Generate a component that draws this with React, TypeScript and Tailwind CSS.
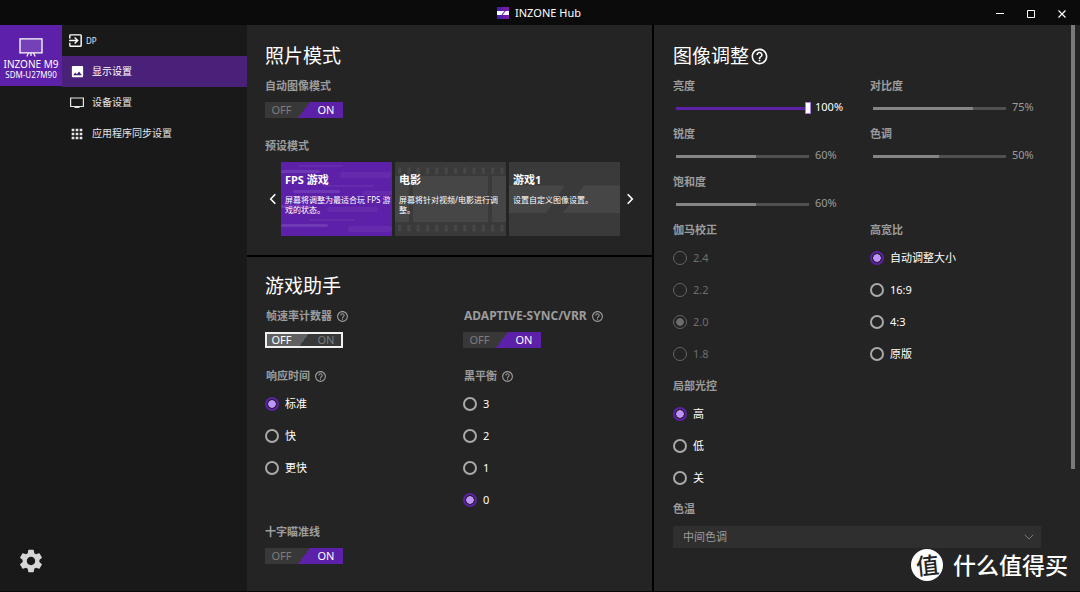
import { useId, useState } from "react";
import type { CSSProperties, ReactNode } from "react";
import { MdApps, MdExitToApp, MdHelpOutline, MdImage, MdSettings } from "react-icons/md";

function SectionTitle({ children }: { children: ReactNode }) {
  return <h2 className="flex h-7 items-center gap-px text-[19px] leading-7 text-white">{children}</h2>;
}

const labelClass = "flex h-4 items-center gap-1 font-bold leading-4 text-[#9c9c9c]";

function Help({ label, size = 13 }: { label: string; size?: number }) {
  return (
    <button type="button" aria-label={label} className="flex items-center">
      <MdHelpOutline size={size} />
    </button>
  );
}

function Toggle({
  title,
  initial,
  help,
  className = "text-[11px]",
}: {
  title: string;
  initial: boolean;
  help?: boolean;
  className?: string;
}) {
  const id = useId();
  const [on, setOn] = useState(initial);
  return (
    <div className="flex flex-col items-start gap-2">
      <div className={`${labelClass} ${className}`}>
        <span id={id}>{title}</span>
        {help && <Help label={`${title} ?`} />}
      </div>
      <button
        type="button"
        role="switch"
        aria-checked={on}
        aria-labelledby={id}
        onClick={() => setOn(!on)}
        className={`grid h-4 w-[78px] grid-cols-2 items-center text-[11px] leading-4 ${
          on
            ? "bg-[linear-gradient(127deg,#383838_50%,#5d20a8_50%)]"
            : "bg-[linear-gradient(127deg,#606060_50%,#383838_50%)] outline-2 -outline-offset-2 outline-[#f0f0f0]"
        }`}
      >
        <span className={on ? "pr-[6px] text-[#7d7d7d]" : "pr-[6px] text-white"}>OFF</span>
        <span className={on ? "pl-[5px] text-white" : "pl-[5px] text-[#7d7d7d]"}>ON</span>
      </button>
    </div>
  );
}

function RadioGroup({
  title,
  options,
  initial,
  help,
  disabled,
  className = "text-[11px]",
}: {
  title: string;
  options: string[];
  initial: string;
  help?: boolean;
  disabled?: boolean;
  className?: string;
}) {
  const name = useId();
  const [value, setValue] = useState(initial);
  return (
    <fieldset className="min-w-0" disabled={disabled}>
      <legend className={`${labelClass} ${className}`}>
        {title}
        {help && <Help label={`${title} ?`} />}
      </legend>
      <div className="mt-1">
        {options.map((o) => (
          <label
            key={o}
            className={`flex h-8 items-center gap-[6px] text-[11px] ${disabled ? "text-[#6e6e6e]" : "text-white"}`}
          >
            <input
              type="radio"
              name={name}
              checked={value === o}
              onChange={() => setValue(o)}
              className={`size-[14px] shrink-0 appearance-none rounded-full ${
                disabled
                  ? "border border-[#636363] checked:bg-[radial-gradient(circle,#6c6c6c_3.5px,transparent_4px)]"
                  : "border-2 border-[#a9a9a9] checked:border-[#5d20a8] checked:bg-[radial-gradient(circle,#bd92fb_3.5px,transparent_4px)]"
              }`}
            />
            {o}
          </label>
        ))}
      </div>
    </fieldset>
  );
}

function Slider({ title, initial, active }: { title: string; initial: number; active?: boolean }) {
  const id = useId();
  const [value, setValue] = useState(initial);
  const style: CSSProperties = {
    backgroundImage: `linear-gradient(to right, ${active ? "#5d20a8" : "#858585"} ${value}%, #505050 ${value}%)`,
  };
  return (
    <div className="h-12">
      <label htmlFor={id} className={`${labelClass} text-[11px]`}>
        {title}
      </label>
      <div className="flex h-7 items-center pl-[3px]">
        <input
          id={id}
          type="range"
          min={0}
          max={100}
          value={value}
          onChange={(e) => setValue(Number(e.target.value))}
          style={style}
          className={`h-[3px] appearance-none ${
            active
              ? "w-[135px] [&::-webkit-slider-thumb]:h-3 [&::-webkit-slider-thumb]:w-[6px] [&::-webkit-slider-thumb]:appearance-none [&::-webkit-slider-thumb]:border [&::-webkit-slider-thumb]:border-[#a77be0] [&::-webkit-slider-thumb]:bg-white"
              : "mr-[2px] w-[133px] [&::-webkit-slider-thumb]:h-3 [&::-webkit-slider-thumb]:w-[6px] [&::-webkit-slider-thumb]:appearance-none [&::-webkit-slider-thumb]:opacity-0"
          }`}
        />
        <output
          htmlFor={id}
          className={`pb-[3px] pl-[4px] text-[11px] leading-4 ${active ? "text-white" : "text-[#9c9c9c]"}`}
        >
          {value}%
        </output>
      </div>
    </div>
  );
}

const streaks = [
  [17, 3, 45, 2],
  [0, 8, 39, 3],
  [59, 10, 51, 6],
  [42, 23, 51, 2],
  [12, 28, 47, 3],
  [81, 29, 30, 4],
  [0, 43, 30, 3],
  [46, 45, 51, 5],
  [28, 57, 46, 2],
  [0, 62, 47, 3],
  [67, 64, 44, 6],
];

const artClass = "absolute inset-0 h-full w-full";

function StreakArt() {
  return (
    <svg viewBox="0 0 111 74" preserveAspectRatio="none" className={artClass} aria-hidden="true">
      {streaks.map(([x, y, w, h]) => (
        <rect
          key={`${x}-${y}`}
          x={x}
          y={y}
          width={w}
          height={h}
          rx={h / 2}
          fill={h === 3 ? "#6f38b4" : "#662bad"}
        />
      ))}
    </svg>
  );
}

function FilmArt() {
  return (
    <svg viewBox="0 0 111 74" preserveAspectRatio="none" className={artClass} fill="#464646" aria-hidden="true">
      {Array.from({ length: 12 }, (_, i) => (
        <g key={i}>
          <rect x={3 + i * 9.3} y={5.5} width={3.3} height={6.5} />
          <rect x={3 + i * 9.3} y={63} width={3.3} height={6.5} />
        </g>
      ))}
      <rect x={0} y={14} width={14} height={46} />
      <rect x={18} y={14} width={75} height={46} />
      <rect x={97} y={14} width={14} height={46} />
    </svg>
  );
}

function BandArt() {
  return (
    <svg viewBox="0 0 111 74" preserveAspectRatio="none" className={artClass} fill="#464646" aria-hidden="true">
      <path d="M0 23.5H56L37 51H0zM75 23.5H111V51H54z" />
    </svg>
  );
}

const presets = [
  { name: "FPS 游戏", text: "屏幕将调整为最适合玩 FPS 游戏的状态。", art: <StreakArt /> },
  { name: "电影", text: "屏幕将针对视频/电影进行调整。", art: <FilmArt /> },
  { name: "游戏1", text: "设置自定义图像设置。", art: <BandArt /> },
];

function Presets() {
  const [selected, setSelected] = useState(0);
  return (
    <div className="mt-2 flex items-center">
      <button type="button" aria-label="上一个" className="flex w-4 shrink-0 justify-center text-white">
        <svg width="8" height="12" viewBox="0 0 8 12" fill="none" stroke="currentColor" strokeWidth="1.6">
          <path d="M6.3 1.2 1.7 6l4.6 4.8" />
        </svg>
      </button>
      <div className="grid flex-1 grid-cols-3 gap-[3px]">
        {presets.map((p, i) => (
          <button
            key={p.name}
            type="button"
            aria-pressed={selected === i}
            onClick={() => setSelected(i)}
            className={`relative flex h-[74px] flex-col pl-1 pt-[10px] text-left text-white ${
              selected === i ? "bg-[#5d20a8]" : "bg-[#3a3a3a]"
            }`}
          >
            {p.art}
            <span className="relative text-[11px] font-bold leading-4">{p.name}</span>
            <span className="relative mt-[7px] text-[8px] leading-[10px]">{p.text}</span>
          </button>
        ))}
      </div>
      <button type="button" aria-label="下一个" className="flex w-5 shrink-0 justify-center text-white">
        <svg width="8" height="12" viewBox="0 0 8 12" fill="none" stroke="currentColor" strokeWidth="1.6">
          <path d="M1.7 1.2 6.3 6l-4.6 4.8" />
        </svg>
      </button>
    </div>
  );
}

function TitleBar() {
  return (
    <header className="grid h-[25px] grid-cols-[1fr_auto_1fr] items-center bg-[#0b0b0b] text-white">
      <span />
      <div className="flex items-center gap-[6px] pr-[2px]">
        <svg width="12" height="12" viewBox="0 0 12 12" aria-hidden="true">
          <defs>
            <linearGradient id="logo" x1="0" x2="1" y1="0" y2="0">
              <stop offset="0" stopColor="#3a22b0" />
              <stop offset="1" stopColor="#8a1a9c" />
            </linearGradient>
          </defs>
          <rect width="12" height="12" fill="url(#logo)" />
          <path d="M0 4h7.500L4.300 8H0zM8.700 4H12v4H5.500z" fill="#fff" />
        </svg>
        <h1 className="text-[11px] leading-4">INZONE Hub</h1>
      </div>
      <div className="flex justify-end pr-[3px]">
        <button type="button" aria-label="最小化" className="flex h-[25px] w-[31px] items-center justify-center">
          <svg width="10" height="10" viewBox="0 0 10 10" stroke="currentColor">
            <path d="M1 5.500h8" />
          </svg>
        </button>
        <button type="button" aria-label="最大化" className="flex h-[25px] w-[31px] items-center justify-center pt-[2px]">
          <svg width="10" height="10" viewBox="0 0 10 10" fill="none" stroke="currentColor">
            <path d="M1.500 1.500h7v7h-7z" />
          </svg>
        </button>
        <button type="button" aria-label="关闭" className="flex h-[25px] w-[31px] items-center justify-center pt-[2px]">
          <svg width="10" height="10" viewBox="0 0 10 10" stroke="currentColor" strokeWidth="1.200">
            <path d="m1.500 1.500 7 7M8.500 1.500l-7 7" />
          </svg>
        </button>
      </div>
    </header>
  );
}

function MonitorIcon() {
  return (
    <svg width="14" height="12" viewBox="0 0 14 12" fill="none" stroke="currentColor" aria-hidden="true">
      <path d="M.6 1h12.800v8.500H.6z" strokeWidth="1.200" />
      <path d="M4.500 10.500h5" />
    </svg>
  );
}

const navItems = [
  { label: "显示设置", icon: <MdImage size={15} />, current: true },
  { label: "设备设置", icon: <MonitorIcon />, current: false },
  { label: "应用程序同步设置", icon: <MdApps size={16} />, current: false },
];

function Sidebar() {
  return (
    <aside className="flex w-[247px] shrink-0 bg-[#191919] text-[#e6e6e6]">
      <div className="flex w-[62px] shrink-0 flex-col items-center justify-between pb-4">
        <button
          type="button"
          className="flex h-[61px] w-full flex-col items-center whitespace-nowrap bg-[#5d20a8] pt-[13px] text-white"
        >
          <svg width="24" height="19" viewBox="0 0 24 19" fill="none" stroke="currentColor" aria-hidden="true">
            <path d="M1 .8h22v14H1z" fill="#7540b8" strokeWidth="1.300" />
            <path d="M9.500 15 7.800 18.500M14.500 15l1.700 3.500M12 15v3" strokeWidth="1.200" />
          </svg>
          <span className="text-[10px] leading-[14px]">INZONE M9</span>
          <span className="text-[8px] leading-2">SDM-U27M90</span>
        </button>
        <button type="button" aria-label="设置" className="text-[#d6d6d6]">
          <MdSettings size={28} />
        </button>
      </div>
      <nav className="min-w-0 flex-1">
        <div className="flex h-[31px] items-center gap-[2px] pl-[5px] text-[8px]">
          <MdExitToApp size={17} className="text-white" />
          DP
        </div>
        {navItems.map((n) => (
          <a
            key={n.label}
            href="#"
            aria-current={n.current ? "page" : undefined}
            className={`flex h-[31px] items-center text-[10px] ${n.current ? "bg-[#492178] text-white" : ""}`}
          >
            <span className="flex w-[30px] justify-center">{n.icon}</span>
            {n.label}
          </a>
        ))}
      </nav>
    </aside>
  );
}

function ColorTemperature() {
  return (
    <div className="mt-[7px]">
      <label htmlFor="color-temperature" className={`${labelClass} text-[11px]`}>
        色温
      </label>
      <div className="relative mt-[9px] flex items-center">
        <select
          id="color-temperature"
          defaultValue="中间色调"
          className="h-[22px] w-full appearance-none bg-[#2f2f2f] pl-[10px] text-[11px] text-[#9c9c9c]"
        >
          <option>中间色调</option>
        </select>
        <svg
          width="10"
          height="6"
          viewBox="0 0 10 6"
          fill="none"
          stroke="#777"
          className="pointer-events-none absolute right-[7px]"
          aria-hidden="true"
        >
          <path d="m.7.7 4.300 4.300L9.300.7" />
        </svg>
      </div>
    </div>
  );
}

export default function App() {
  return (
    <div className="relative flex min-h-screen flex-col bg-[#242424] font-['Noto_Sans','Noto_Sans_CJK_SC',sans-serif]">
      <TitleBar />
      <main className="flex flex-1 border-b border-[#0c0608]">
        <Sidebar />
        <div className="grid min-w-0 flex-1 grid-cols-[407fr_426fr]">
          <div className="flex flex-col border-r-2 border-black">
            <section className="border-b-2 border-black pb-[19px] pl-[18px] pr-3 pt-[17px]">
              <SectionTitle>照片模式</SectionTitle>
              <div className="mt-2">
                <Toggle title="自动图像模式" initial />
              </div>
              <h3 className={`${labelClass} mt-5 text-[11px]`}>预设模式</h3>
              <Presets />
            </section>
            <section className="pl-[18px] pt-[15px]">
              <SectionTitle>游戏助手</SectionTitle>
              <div className="mt-2 grid grid-cols-[198px_1fr] gap-y-5">
                <Toggle title="帧速率计数器" initial={false} help className="pl-px text-[11px]" />
                <Toggle title="ADAPTIVE-SYNC/VRR" initial help className="pl-px text-[12px]" />
                <RadioGroup
                  title="响应时间"
                  options={["标准", "快", "更快"]}
                  initial="标准"
                  help
                  className="pl-px text-[11px]"
                />
                <RadioGroup
                  title="黑平衡"
                  options={["3", "2", "1", "0"]}
                  initial="0"
                  help
                  className="pl-px text-[11px]"
                />
              </div>
              <div className="mt-2">
                <Toggle title="十字瞄准线" initial />
              </div>
            </section>
          </div>
          <div className="flex">
            <section className="min-w-0 flex-1 pl-[19px] pr-[30px] pt-[17px]">
              <SectionTitle>
                图像调整
                <Help label="图像调整 ?" size={19} />
              </SectionTitle>
              <div className="mt-2 grid grid-cols-[197px_1fr]">
                <Slider title="亮度" initial={100} active />
                <Slider title="对比度" initial={75} />
                <Slider title="锐度" initial={60} />
                <Slider title="色调" initial={50} />
                <Slider title="饱和度" initial={60} />
              </div>
              <div className="grid grid-cols-[197px_1fr] gap-y-2">
                <RadioGroup title="伽马校正" options={["2.4", "2.2", "2.0", "1.8"]} initial="2.0" disabled />
                <RadioGroup
                  title="高宽比"
                  options={["自动调整大小", "16:9", "4:3", "原版"]}
                  initial="自动调整大小"
                />
                <RadioGroup title="局部光控" options={["高", "低", "关"]} initial="高" />
              </div>
              <ColorTemperature />
            </section>
            <div className="w-[9px] shrink-0">
              <div className="h-[78.4%] w-1 bg-[#7a7a7a]" />
            </div>
          </div>
        </div>
      </main>
      <div className="absolute bottom-[11px] right-3 flex items-center gap-[10px] text-white">
        <span className="flex size-8 items-center justify-center rounded-full bg-white text-[23px] font-medium leading-8 text-[#242424]">
          <span className="-rotate-6">值</span>
        </span>
        <span className="text-[23px] font-medium leading-8">什么值得买</span>
      </div>
    </div>
  );
}
